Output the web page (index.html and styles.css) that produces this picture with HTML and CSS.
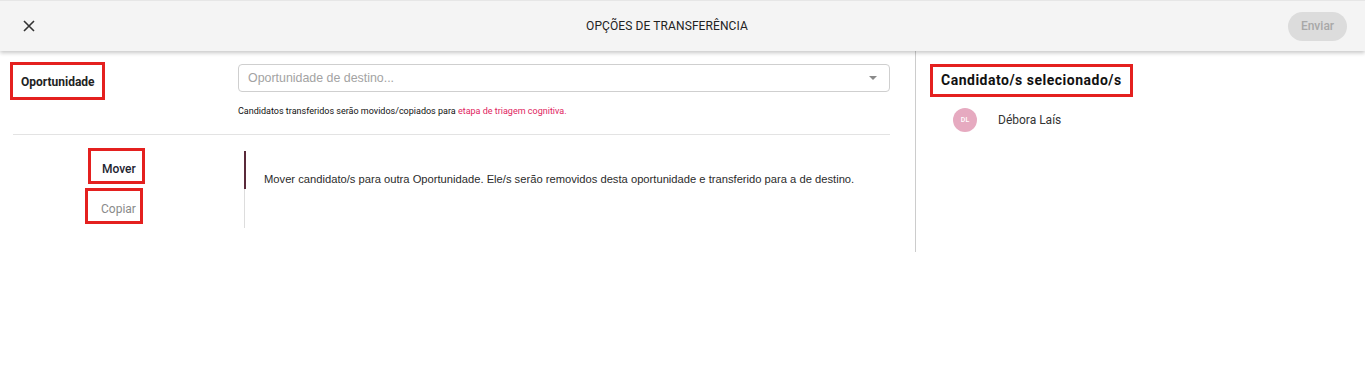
FILE: index.html
```html
<!DOCTYPE html>
<html lang="pt-BR">
<head>
    <meta charset="UTF-8">
    <meta name="viewport" content="width=device-width, initial-scale=1.0">
    <title>Opções de transferência</title>
    <link rel="stylesheet" href="styles.css">
</head>
<body>

<header class="topbar">
    <button class="close-btn" aria-label="Fechar">
        <svg width="12" height="12" viewBox="0 0 12 12">
            <path d="M1 1 L11 11 M11 1 L1 11" stroke="#333" stroke-width="1.6" fill="none"/>
        </svg>
    </button>
    <h1 class="title">OPÇÕES DE TRANSFERÊNCIA</h1>
    <button class="send-btn" disabled>Enviar</button>
</header>

<main class="layout">
    <section class="options">
        <div class="row-dest">
            <div class="label-cell">
                <span class="mark label-op">Oportunidade</span>
            </div>
            <div class="field-cell">
                <div class="select">
                    <span class="placeholder">Oportunidade de destino...</span>
                    <span class="caret"></span>
                </div>
                <p class="hint">Candidatos transferidos serão movidos/copiados para <span class="hint-link">etapa de triagem cognitiva.</span></p>
            </div>
        </div>

        <div class="divider"></div>

        <div class="row-tabs">
            <div class="tab-list">
                <span class="mark tab tab-active">Mover</span>
                <span class="mark tab tab-copy">Copiar</span>
            </div>
            <div class="tab-track">
                <div class="tab-ink"></div>
            </div>
            <p class="tab-desc">Mover candidato/s para outra Oportunidade. Ele/s serão removidos desta oportunidade e transferido para a de destino.</p>
        </div>
    </section>

    <aside class="selected">
        <h2 class="mark selected-title">Candidato/s selecionado/s</h2>
        <div class="person">
            <span class="avatar">DL</span>
            <span class="person-name">Débora Laís</span>
        </div>
    </aside>
</main>

</body>
</html>
```

FILE: styles.css
```css
/* Root colors */
:root {
    --text: #222222;
    --muted: #888888;
    --line: #e3e3e3;
    --mark: #e4201f;
    --accent: #e0245e;
}

body {
    margin: 0;
    font-family: Roboto, 'Liberation Sans', sans-serif;
    color: var(--text);
    background: #ffffff;
}

/* Top bar */
.topbar {
    position: relative;
    height: 51px;
    display: flex;
    align-items: center;
    background: #f4f4f4;
    border-top: 1px solid #e6e6e6;
    box-sizing: border-box;
    box-shadow: 0 2px 4px rgba(0, 0, 0, 0.22);
    z-index: 1;
}

.close-btn {
    width: 34px;
    height: 34px;
    margin-left: 12px;
    border: none;
    background: none;
    display: flex;
    align-items: center;
    justify-content: center;
    padding: 0;
}

.title {
    flex: 1;
    margin: 0;
    text-align: center;
    font-size: 12px;
    font-weight: 400;
    letter-spacing: 0.1px;
    color: #222;
}

.send-btn {
    width: 59px;
    height: 29px;
    margin-right: 18px;
    border: none;
    border-radius: 15px;
    background: #dcdcdc;
    color: #a8a8a8;
    font-family: Roboto, sans-serif;
    font-size: 12px;
    font-weight: 500;
}

/* Layout */
.layout {
    display: flex;
}

.options {
    width: 916px;
    min-height: 201px;
    box-sizing: border-box;
    border-right: 1px solid #cccccc;
    padding: 11px 25px 0 10px;
}

/* Red annotation boxes */
.mark {
    display: inline-block;
    border: 3px solid var(--mark);
    box-sizing: border-box;
}

.row-dest {
    display: flex;
}

.label-cell {
    width: 228px;
}

.label-op {
    width: 95px;
    height: 38px;
    padding: 10px 0 0 8px;
    font-size: 12px;
    font-weight: 700;
}

.field-cell {
    flex: 1;
    padding-top: 2px;
}

.select {
    height: 28px;
    border: 1px solid #cfcfcf;
    border-radius: 4px;
    box-sizing: border-box;
    display: flex;
    align-items: center;
    justify-content: space-between;
    padding: 0 12px 0 9px;
}

.placeholder {
    font-family: 'Liberation Sans', Arial, sans-serif;
    font-size: 12.4px;
    color: #a3a3a3;
}

.caret {
    width: 0;
    height: 0;
    border-left: 4px solid transparent;
    border-right: 4px solid transparent;
    border-top: 4px solid #8a8a8a;
}

.hint {
    margin: 14px 0 0;
    font-size: 9px;
    color: #111;
}

.hint-link {
    color: var(--accent);
}

.divider {
    height: 1px;
    margin: 18px 0 0 3px;
    background: var(--line);
}

/* Tabs */
.row-tabs {
    display: flex;
    align-items: flex-start;
}

.tab-list {
    width: 234px;
    display: flex;
    flex-direction: column;
    padding-top: 13px;
}

.tab {
    height: 36px;
    font-size: 12px;
}

.tab-active {
    width: 57px;
    margin-left: 78px;
    padding: 11px 0 0 11px;
    font-weight: 500;
    color: #1e2430;
}

.tab-copy {
    width: 58px;
    margin: 4px 0 0 75px;
    padding: 11px 0 0 13px;
    color: #8a8a8a;
}

.tab-track {
    width: 1px;
    height: 77px;
    margin-top: 16px;
    background: #dddddd;
}

.tab-ink {
    width: 2px;
    height: 38px;
    background: #5a2a3a;
}

.tab-desc {
    margin: 38px 0 0 19px;
    font-family: 'Liberation Sans', Arial, sans-serif;
    font-size: 11.2px;
    color: #2b2b2b;
}

/* Selected candidates */
.selected {
    flex: 1;
    padding: 13px 0 0 14px;
}

.selected-title {
    margin: 0;
    width: 203px;
    height: 33px;
    padding: 5px 0 0 8px;
    font-size: 14px;
    font-weight: 700;
    letter-spacing: 0.5px;
    color: #111;
}

.person {
    display: flex;
    align-items: center;
    margin: 11px 0 0 23px;
}

.avatar {
    width: 24px;
    height: 24px;
    border-radius: 50%;
    background: #e6aac0;
    color: #ffffff;
    font-size: 7px;
    font-weight: 500;
    display: flex;
    align-items: center;
    justify-content: center;
}

.person-name {
    margin-left: 21px;
    font-size: 12px;
    color: #333;
}
```
